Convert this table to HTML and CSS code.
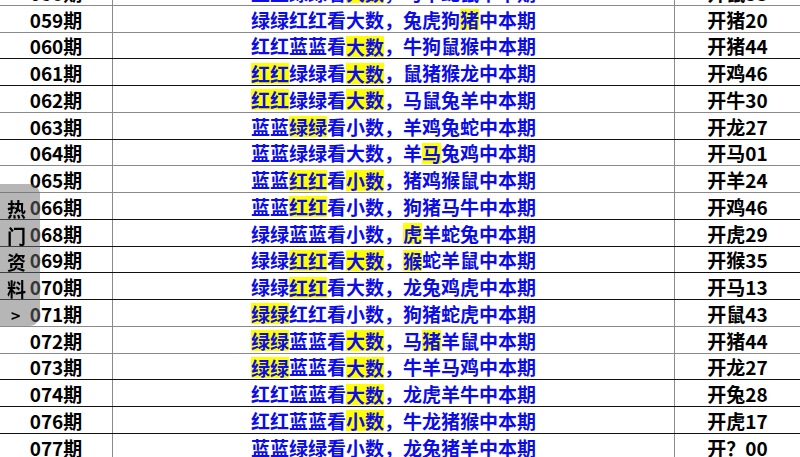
FILE: index.html
```html
<!DOCTYPE html>
<html lang="zh">
<head>
<meta charset="utf-8">
<link rel="stylesheet" href="styles.css">
</head>
<body>
<div class="table">
  <div class="row"><div class="c1">058期</div><div class="c2">蓝蓝绿绿看<span class="hl">大数</span>，马牛蛇鼠中本期</div><div class="c3">开鼠33</div></div>
  <div class="row g"><div class="c1">059期</div><div class="c2">绿绿红红看大数，兔虎狗<span class="hl">猪</span>中本期</div><div class="c3">开猪20</div></div>
  <div class="row g"><div class="c1">060期</div><div class="c2">红红蓝蓝看<span class="hl">大数</span>，牛狗鼠猴中本期</div><div class="c3">开猪44</div></div>
  <div class="row"><div class="c1">061期</div><div class="c2"><span class="hl">红红</span>绿绿看<span class="hl">大数</span>，鼠猪猴龙中本期</div><div class="c3">开鸡46</div></div>
  <div class="row"><div class="c1">062期</div><div class="c2"><span class="hl">红红</span>绿绿看<span class="hl">大数</span>，马鼠兔羊中本期</div><div class="c3">开牛30</div></div>
  <div class="row g"><div class="c1">063期</div><div class="c2">蓝蓝<span class="hl">绿绿</span>看小数，羊鸡兔蛇中本期</div><div class="c3">开龙27</div></div>
  <div class="row"><div class="c1">064期</div><div class="c2">蓝蓝绿绿看大数，羊<span class="hl">马</span>兔鸡中本期</div><div class="c3">开马01</div></div>
  <div class="row g"><div class="c1">065期</div><div class="c2">蓝蓝<span class="hl">红红</span>看<span class="hl">小数</span>，猪鸡猴鼠中本期</div><div class="c3">开羊24</div></div>
  <div class="row g"><div class="c1">066期</div><div class="c2">蓝蓝<span class="hl">红红</span>看小数，狗猪马牛中本期</div><div class="c3">开鸡46</div></div>
  <div class="row"><div class="c1">068期</div><div class="c2">绿绿蓝蓝看小数，<span class="hl">虎</span>羊蛇兔中本期</div><div class="c3">开虎29</div></div>
  <div class="row"><div class="c1">069期</div><div class="c2">绿绿<span class="hl">红红</span>看<span class="hl">大数</span>，<span class="hl">猴</span>蛇羊鼠中本期</div><div class="c3">开猴35</div></div>
  <div class="row"><div class="c1">070期</div><div class="c2">绿绿<span class="hl">红红</span>看大数，龙兔鸡虎中本期</div><div class="c3">开马13</div></div>
  <div class="row"><div class="c1">071期</div><div class="c2"><span class="hl">绿绿</span>红红看小数，狗猪蛇虎中本期</div><div class="c3">开鼠43</div></div>
  <div class="row g"><div class="c1">072期</div><div class="c2"><span class="hl">绿绿</span>蓝蓝看<span class="hl">大数</span>，马<span class="hl">猪</span>羊鼠中本期</div><div class="c3">开猪44</div></div>
  <div class="row g"><div class="c1">073期</div><div class="c2"><span class="hl">绿绿</span>蓝蓝看<span class="hl">大数</span>，牛羊马鸡中本期</div><div class="c3">开龙27</div></div>
  <div class="row"><div class="c1">074期</div><div class="c2">红红蓝蓝看<span class="hl">大数</span>，龙虎羊牛中本期</div><div class="c3">开兔28</div></div>
  <div class="row"><div class="c1">076期</div><div class="c2">红红蓝蓝看<span class="hl">小数</span>，牛龙猪猴中本期</div><div class="c3">开虎17</div></div>
  <div class="row"><div class="c1">077期</div><div class="c2">蓝蓝绿绿看小数，龙兔猪羊中本期</div><div class="c3">开？00</div></div>
</div>
<div class="side">热<br>门<br>资<br>料<br><span class="arrow">&gt;</span></div>
</body>
</html>
```
FILE: styles.css
```css
html, body {
  margin: 0;
  padding: 0;
  background: #fff;
  overflow: hidden;
}
body {
  width: 800px;
  height: 457px;
  font-family: "Noto Sans CJK SC", "Liberation Sans", sans-serif;
  font-weight: 700;
  font-size: 19px;
  color: #000;
}
.table {
  margin-top: -22px;
  display: grid;
  grid-auto-rows: 26.75px;
}
.row {
  display: grid;
  grid-template-columns: 112px 562px 126px;
  border-top: 1px solid #111;
  box-sizing: border-box;
}
.row.g {
  border-top-color: #8a8a8a;
}
.c1, .c2, .c3 {
  display: flex;
  align-items: center;
  justify-content: center;
  padding-top: 2px;
  box-sizing: border-box;
  line-height: 20px;
  white-space: nowrap;
}
.c2, .c3 {
  border-left: 1px solid #8a8a8a;
}
.c2 {
  color: #0c0ce6;
}
.hl {
  background: #ffff00;
  display: inline-block;
  line-height: 21px;
}
.side {
  position: fixed;
  left: 0;
  top: 184px;
  width: 40px;
  height: 142px;
  box-sizing: border-box;
  padding: 12px 0 0 7px;
  background: rgba(110, 110, 110, 0.5);
  border-radius: 0 11px 11px 0;
  line-height: 26.5px;
  font-size: 19px;
  color: #000;
}
.arrow {
  font-size: 16px;
  margin-left: 4px;
  vertical-align: 4px;
}
```
